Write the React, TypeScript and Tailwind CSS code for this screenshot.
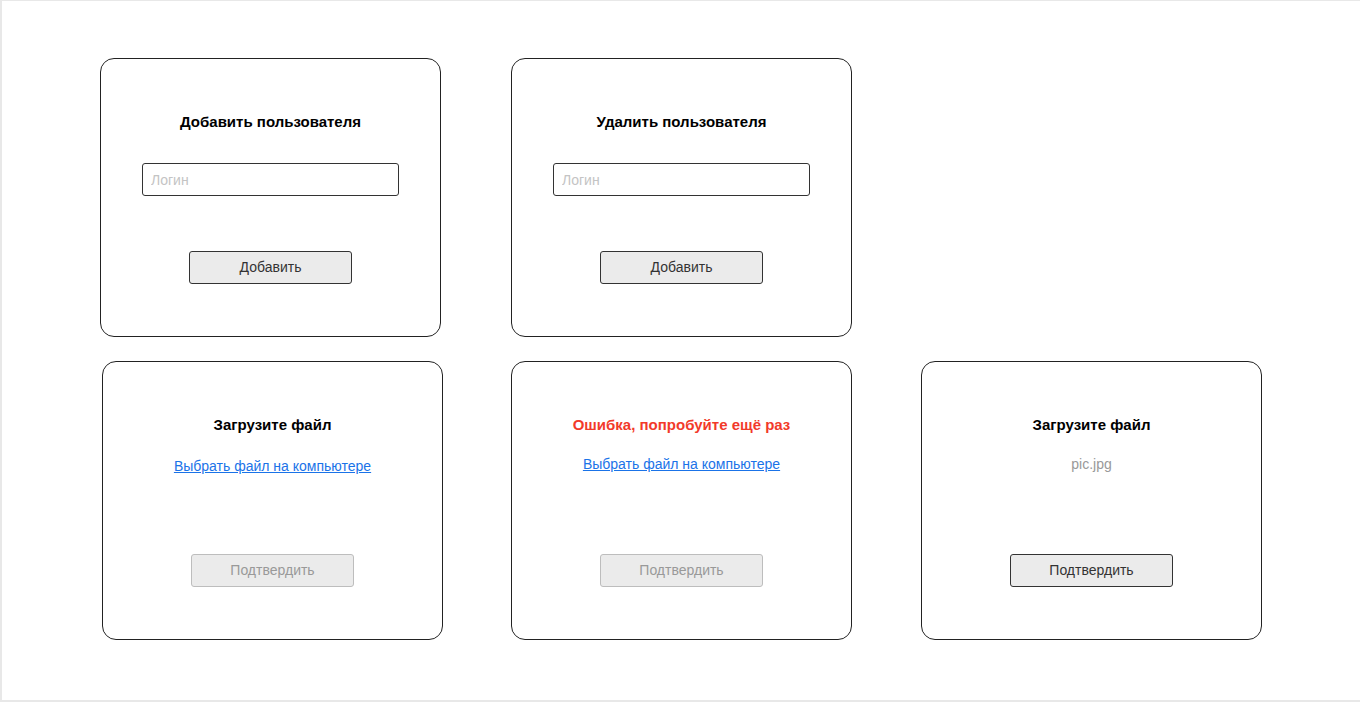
const font = 'font-["Liberation_Sans",Arial,sans-serif]';

function Card({ children, className = '' }: { children: React.ReactNode; className?: string }) {
  return (
    <div className={`w-[341px] h-[279px] border border-[#222] rounded-[14px] flex flex-col items-center pt-[53px] ${className}`}>
      {children}
    </div>
  );
}

function Title({ text, error = false }: { text: string; error?: boolean }) {
  return (
    <h2 className={`text-[15px] leading-5 font-bold ${error ? 'text-[#f23a2a]' : 'text-black'}`}>{text}</h2>
  );
}

function Button({ label, disabled = false, className = '' }: { label: string; disabled?: boolean; className?: string }) {
  return (
    <button
      disabled={disabled}
      className={`w-[163px] h-[33px] rounded-[3px] bg-[#ebebeb] text-[14px] ${
        disabled ? 'border border-[#bdbdbd] text-[#999]' : 'border border-[#333] text-[#333]'
      } ${className}`}
    >
      {label}
    </button>
  );
}

function UserCard({ title }: { title: string }) {
  return (
    <Card>
      <Title text={title} />
      <input
        placeholder="Логин"
        className="mt-[31px] w-[257px] h-[33px] border border-[#333] rounded-[3px] px-2 text-[14px] placeholder:text-[#c4c4c4] outline-none"
      />
      <Button label="Добавить" className="mt-[55px]" />
    </Card>
  );
}

export default function App() {
  return (
    <div className={`${font} w-[1360px] h-[702px] bg-white border-l-2 border-t border-b-2 border-[#e8e8e8]`}>
      <div className="pl-[98px] pt-[57px] flex flex-col gap-6">
        <div className="flex gap-[70px]">
          <UserCard title="Добавить пользователя" />
          <UserCard title="Удалить пользователя" />
        </div>
        <div className="flex gap-[69px]">
          <Card className="ml-[2px] mr-[-1px]">
            <Title text="Загрузите файл" />
            <a href="#" className="mt-[21px] text-[14px] leading-5 text-[#1a73e8] underline">
              Выбрать файл на компьютере
            </a>
            <Button label="Подтвердить" disabled className="mt-[78px]" />
          </Card>
          <Card>
            <Title text="Ошибка, попробуйте ещё раз" error />
            <a href="#" className="mt-[19px] text-[14px] leading-5 text-[#1a73e8] underline">
              Выбрать файл на компьютере
            </a>
            <Button label="Подтвердить" disabled className="mt-[80px]" />
          </Card>
          <Card>
            <Title text="Загрузите файл" />
            <p className="mt-[19px] text-[14px] leading-5 text-[#999]">pic.jpg</p>
            <Button label="Подтвердить" className="mt-[80px]" />
          </Card>
        </div>
      </div>
    </div>
  );
}
